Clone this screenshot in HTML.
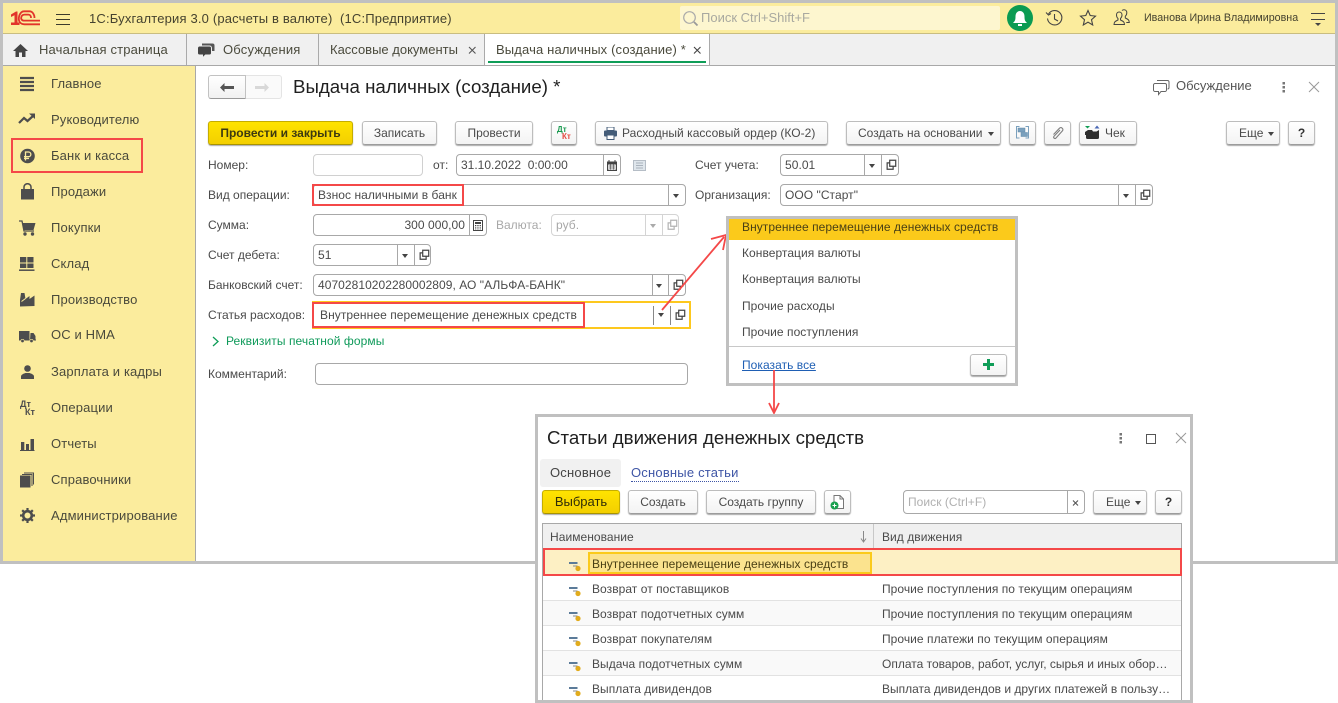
<!DOCTYPE html>
<html lang="ru"><head><meta charset="utf-8"><title>Выдача наличных</title>
<style>
html,body{margin:0;padding:0;background:#fff}
#p{position:relative;width:1338px;height:703px;overflow:hidden;background:#fff;font-family:"Liberation Sans",Arial,sans-serif;font-size:12px;color:#4a4a4a}
#p div,#p span,#p svg{position:absolute;box-sizing:border-box}
.t{white-space:nowrap;height:16px;line-height:16px;letter-spacing:.05px}
.n{font-size:13px;color:#4a4a3c;letter-spacing:.14px}
.i{background:#fff;border:1px solid #a8a8a8;border-radius:4px;height:22px}
.s{top:0;bottom:0;width:1px;background:#a8a8a8}
.a{width:0;height:0;border-left:3.5px solid transparent;border-right:3.5px solid transparent;border-top:4px solid #444}
.b{background:linear-gradient(#fff,#f3f3f3);border:1px solid #bdbdbd;border-bottom-color:#9c9c9c;border-radius:3px;box-shadow:0 1px 1px #aaa;height:24px;text-align:center;line-height:22px;white-space:nowrap;color:#4a4a4a}
.y{background:linear-gradient(#ffe300,#f3cf00);border-color:#c5ad00;border-bottom-color:#a89300;font-weight:bold;color:#3d3a10}
.v{color:#4a4a4a;left:4px}
</style></head><body>
<div id="p">
<svg width="0" height="0" style="left:0;top:0"><defs>
<symbol id="o" viewBox="0 0 14 14"><path d="M5.500 1.500h7v7h-7zM5.500 4.500h-3v7.500h7v-3.500" fill="none" stroke="#444" stroke-width="1.400"/></symbol>
<symbol id="z" viewBox="0 0 13 11"><rect x="0" y="1" width="8.500" height="2" fill="#5b7b99"/><rect x="4" y="4.500" width="4.500" height="1" fill="#888"/><circle cx="9" cy="7.500" r="2.600" fill="#e2ac1d"/></symbol>
</defs></svg>

<!-- frame -->
<div style="left:0;top:0;width:1338px;height:564px;background:#c0c0c0"></div>
<div style="left:3px;top:3px;width:1332px;height:558px;background:#fff"></div>

<!-- header -->
<div style="left:3px;top:3px;width:1332px;height:31px;background:#fbec9d;border-bottom:1px solid #c9bd80"></div>
<svg style="left:11px;top:10px" width="30" height="16" viewBox="0 0 30 16"><path d="M0 4.500L5 1.500H6.500V12.500H8.500V15H0V12.500H3.500V5.200L0 7z" fill="#e2342b"/><path d="M29 14.300H13.500C9.500 14.300 6.600 11.500 8.300 5.500C9.500 2.500 11 1.300 13 1.300H18.500C21.500 1.300 23.500 4.500 23.500 8" fill="none" stroke="#e2342b" stroke-width="1.800"/><path d="M29 10.600H13C10.500 10.600 9.800 8.500 10.300 7C10.800 5.300 12 4.600 13.500 4.600H17.500C19 4.600 20 6 20 8" fill="none" stroke="#e2342b" stroke-width="1.800"/></svg>
<svg style="left:56px;top:13px" width="15" height="12"><path d="M0 1.500h14M0 6.500h14M0 11.500h14" stroke="#3c3a2c" stroke-width="1.100"/></svg>
<div class="t" style="left:89px;top:11px;font-size:13px;color:#45422f;letter-spacing:.17px">1С:Бухгалтерия 3.0 (расчеты в валюте) &nbsp;(1С:Предприятие)</div>
<div style="left:680px;top:6px;width:320px;height:24px;background:#fdf6cf;border-radius:2px"></div>
<svg style="left:682px;top:10px" width="17" height="17"><circle cx="7.500" cy="7.500" r="5.800" fill="none" stroke="#aaa" stroke-width="1.200"/><path d="M12 12l3.500 3.500" stroke="#999" stroke-width="1.800"/></svg>
<div class="t" style="left:701px;top:10px;font-size:13px;color:#a9a9a0;letter-spacing:0">Поиск Ctrl+Shift+F</div>
<svg style="left:1007px;top:5px" width="27" height="27"><circle cx="13" cy="13" r="13" fill="#0b9b52"/><path d="M6 18c2-2 2.500-3 2.500-6.500s2-5.500 4.500-5.500 4.500 2 4.500 5.500.5 4.500 2.500 6.500z" fill="#fff"/><rect x="11" y="19" width="4" height="2" fill="#fff"/></svg>
<svg style="left:1045px;top:9px" width="19" height="18" fill="none" stroke="#444" stroke-width="1.100"><path d="M3.500 5A7.200 7.200 0 1 1 2.500 9.500"/><path d="M1 3.500l2.500 2.500 2.500-1.500"/><path d="M9.500 5v5l3.500 2"/></svg>
<svg style="left:1079px;top:9px" width="18" height="18"><path d="M9 1.500l2.200 5 5.300.6-4 3.600 1.200 5.300L9 13.200 4.300 16l1.200-5.300-4-3.600 5.300-.6z" fill="none" stroke="#444" stroke-width="1.100"/></svg>
<svg style="left:1113px;top:9px" width="18" height="17" fill="none" stroke="#444" stroke-width="1"><path d="M1 15.500c0-3 2-3.500 4-4.500v-1.500c-1.200-1-1.500-2-1.500-3.500 0-2 1.300-3 2.700-3s2.800 1 2.800 3c0 1.500-.4 2.500-1.500 3.500V11c2 1 4 1.500 4 4.500z"/><path d="M9 1.500c.7-.6 1.400-.8 2-.8 1.500 0 2.800 1 2.800 3 0 1.500-.4 2.500-1.500 3.500V9c2 1 4 1.500 4 4.500h-3"/></svg>
<div class="t" style="left:1144px;top:10px;font-size:10.700px;color:#45422f;letter-spacing:0">Иванова Ирина Владимировна</div>
<svg style="left:1310px;top:12px" width="16" height="15"><path d="M1 1.500h14M1 7.500h14" stroke="#444" stroke-width="1"/><path d="M5 11h6l-3 3z" fill="#444"/></svg>

<!-- tabs -->
<div style="left:3px;top:34px;width:1332px;height:32px;background:#f0f0f0;border-bottom:1px solid #a8a8a8"></div>
<div style="left:186px;top:34px;width:1px;height:31px;background:#aaa"></div>
<div style="left:318px;top:34px;width:1px;height:31px;background:#aaa"></div>
<div style="left:484px;top:34px;width:226px;height:32px;background:#fff;border-left:1px solid #aaa;border-right:1px solid #aaa;border-bottom:1px solid #a8a8a8"></div>
<div style="left:488px;top:61px;width:218px;height:2px;background:#0f9d58"></div>
<svg style="left:13px;top:43px" width="15" height="14"><path d="M7.500 1L0 8h2.500v6h3.500V9.500h3V14h3.500V8H15z" fill="#444"/></svg>
<div class="t n" style="left:39px;top:42px;letter-spacing:.17px">Начальная страница</div>
<svg style="left:197px;top:42px" width="18" height="17"><path d="M5 1.500h10.500a2 2 0 0 1 2 2V9H5z" fill="#555"/><path d="M2.500 4h10a2 2 0 0 1 2 2v5a2 2 0 0 1-2 2H8.500L5.500 16v-3h-3a2 2 0 0 1-2-2V6a2 2 0 0 1 2-2z" fill="#444" stroke="#f0f0f0"/></svg>
<div class="t n" style="left:223px;top:42px;letter-spacing:.2px">Обсуждения</div>
<div class="t n" style="left:330px;top:42px;letter-spacing:0">Кассовые документы</div>
<svg style="left:468px;top:46px" width="9" height="9"><path d="M1 1l6.500 6.500M7.500 1L1 7.500" stroke="#555" stroke-width="1.100"/></svg>
<div class="t n" style="left:496px;top:42px">Выдача наличных (создание) *</div>
<svg style="left:693px;top:46px" width="9" height="9"><path d="M1 1l6.500 6.500M7.500 1L1 7.500" stroke="#444" stroke-width="1.100"/></svg>

<!-- sidebar -->
<div style="left:3px;top:66px;width:193px;height:495px;background:#fbec9d;border-right:1px solid #a8a8a8"></div>
<svg style="left:19px;top:76px" width="16" height="16"><path d="M1 2h14M1 6h14M1 10h14M1 14h14" stroke="#4d4d4d" stroke-width="2.200"/></svg>
<div class="t n" style="left:51px;top:76px">Главное</div>
<svg style="left:18px;top:112px" width="18" height="14"><path d="M1 11l5-5 3.500 3L15 4" fill="none" stroke="#4d4d4d" stroke-width="2.200"/><path d="M11 1.500h6v5.500z" fill="#4d4d4d"/></svg>
<div class="t n" style="left:51px;top:112px">Руководителю</div>
<svg style="left:20px;top:148px" width="15" height="16"><circle cx="7.500" cy="8" r="7.300" fill="#4d4d4d"/><path d="M5.500 12.500V4h3a2.300 2.300 0 0 1 0 4.700h-4.500M4 10.500h5" fill="none" stroke="#fbec9d" stroke-width="1.300"/></svg>
<div class="t n" style="left:51px;top:148px">Банк и касса</div>
<svg style="left:21px;top:183px" width="13" height="17"><path d="M0 6h13v10.500H0z" fill="#4d4d4d"/><path d="M3 9V4a3.500 3.300 0 0 1 7 0v5" fill="none" stroke="#4d4d4d" stroke-width="1.500"/></svg>
<div class="t n" style="left:51px;top:184px">Продажи</div>
<svg style="left:19px;top:220px" width="17" height="16"><path d="M3.500 3h13l-2 7H5z" fill="#4d4d4d"/><path d="M0 1h3l2 10h10" fill="none" stroke="#4d4d4d" stroke-width="1.300"/><circle cx="6" cy="14" r="1.700" fill="#4d4d4d"/><circle cx="13.500" cy="14" r="1.700" fill="#4d4d4d"/></svg>
<div class="t n" style="left:51px;top:220px">Покупки</div>
<svg style="left:19px;top:256px" width="16" height="16"><path d="M1 1h6.300v5.500H1zM8.300 1h6.200v5.500H8.300zM1 7.500h6.300V12H1zM8.300 7.500h6.200V12H8.300z" fill="#4d4d4d"/><path d="M0 14.200h15.500" stroke="#4d4d4d" stroke-width="1.500"/></svg>
<div class="t n" style="left:51px;top:256px">Склад</div>
<svg style="left:20px;top:292px" width="15" height="15"><path d="M0 14.500V8l1-7h3.500l1 6 4-3v3l5-3.500v10.500z" fill="#4d4d4d"/><path d="M1.500 9.500l4-3" stroke="#fbec9d"/></svg>
<div class="t n" style="left:51px;top:292px">Производство</div>
<svg style="left:19px;top:331px" width="17" height="12"><rect x="0" y="0" width="10.500" height="8.500" fill="#4d4d4d"/><path d="M11.500 2h3l2 3v4h-5.500z" fill="#4d4d4d"/><path d="M0 9h17" stroke="#4d4d4d"/><circle cx="3.500" cy="10" r="1.700" fill="#4d4d4d" stroke="#fbec9d" stroke-width=".6"/><circle cx="12.500" cy="10" r="1.700" fill="#4d4d4d" stroke="#fbec9d" stroke-width=".6"/></svg>
<div class="t n" style="left:51px;top:327px">ОС и НМА</div>
<svg style="left:21px;top:365px" width="13" height="14"><circle cx="6.500" cy="3.500" r="3.300" fill="#4d4d4d"/><path d="M0 14v-2.500c0-2 3-3 4.500-3.500h4c1.500.5 4.500 1.500 4.500 3.500V14z" fill="#4d4d4d"/></svg>
<div class="t n" style="left:51px;top:364px">Зарплата и кадры</div>
<div class="t" style="left:20px;top:399px;font-size:9px;font-weight:bold;color:#4d4d4d;height:10px;line-height:10px">Дт</div>
<div class="t" style="left:25px;top:407px;font-size:9px;font-weight:bold;color:#4d4d4d;height:10px;line-height:10px">Кт</div>
<div class="t n" style="left:51px;top:400px">Операции</div>
<svg style="left:20px;top:438px" width="15" height="13"><path d="M1 4h3.300v8H1zM6 6h3v6H6zM10.500 1H14v11h-3.500z" fill="#4d4d4d"/><path d="M0 12.500h14.500" stroke="#4d4d4d"/></svg>
<div class="t n" style="left:51px;top:436px">Отчеты</div>
<svg style="left:20px;top:472px" width="15" height="16"><path d="M0 3.500h10.500V15.500H0z" fill="#4d4d4d"/><path d="M2 2.500h10V14M4 1h9.500v11.500" fill="none" stroke="#4d4d4d"/></svg>
<div class="t n" style="left:51px;top:472px">Справочники</div>
<svg style="left:20px;top:508px" width="15" height="15" viewBox="0 0 15 15"><circle cx="7.500" cy="7.500" r="4.300" fill="none" stroke="#4d4d4d" stroke-width="2.600"/><path d="M7.500 0v3M7.500 12v3M0 7.500h3M12 7.500h3M2.200 2.200l2 2M10.800 10.800l2 2M2.200 12.800l2-2M10.800 4.200l2-2" stroke="#4d4d4d" stroke-width="2.200"/></svg>
<div class="t n" style="left:51px;top:508px;letter-spacing:.16px">Администрирование</div>
<div style="left:11px;top:138px;width:132px;height:35px;border:2px solid #f44848"></div>

<!-- form head -->
<div style="left:208px;top:75px;width:38px;height:24px;background:linear-gradient(#fff,#f1f1f1);border:1px solid #c2c2c2;border-bottom-color:#999;border-radius:3px 0 0 3px"></div>
<div style="left:246px;top:75px;width:36px;height:24px;background:#fafafa;border:1px solid #e4e4e4;border-left:0;border-radius:0 3px 3px 0"></div>
<svg style="left:220px;top:83px" width="15" height="9"><path d="M4.500 0L0 4.500 4.500 9V6H14V3H4.500z" fill="#555"/></svg>
<svg style="left:255px;top:83px" width="15" height="9"><path d="M9.500 0L14 4.500 9.500 9V6H0V3h9.500z" fill="#d8d8d8"/></svg>
<div class="t" style="left:293px;top:75px;font-size:18.700px;height:24px;line-height:24px;color:#1f1f1f;letter-spacing:0">Выдача наличных (создание) *</div>
<svg style="left:1153px;top:79px" width="18" height="17" fill="none" stroke="#666" stroke-width="1"><path d="M2 4.500h10a1.500 1.500 0 0 1 1.500 1.500v5a1.500 1.500 0 0 1-1.500 1.500H8L5.500 15.500v-3H2A1.500 1.500 0 0 1 .5 11V6A1.500 1.500 0 0 1 2 4.500z"/><path d="M4 1.500h10.500A1.500 1.500 0 0 1 16 3v5.500a1.500 1.500 0 0 1-1.500 1.500"/></svg>
<div class="t n" style="left:1176px;top:78px;color:#555;letter-spacing:0">Обсуждение</div>
<svg style="left:1282px;top:82px" width="4" height="11"><path d="M.5 0H3v2.500H.5zM.5 4H3v2.500H.5zM.5 8H3v2.500H.5z" fill="#777"/></svg>
<svg style="left:1308px;top:81px" width="13" height="13"><path d="M1 1l10 10M11 1L1 11" stroke="#999" stroke-width="1"/></svg>

<!-- toolbar -->
<div class="b y" style="left:208px;top:121px;width:145px">Провести и закрыть</div>
<div class="b" style="left:362px;top:121px;width:75px">Записать</div>
<div class="b" style="left:455px;top:121px;width:78px">Провести</div>
<div class="b" style="left:551px;top:121px;width:26px"></div>
<div class="t" style="left:557px;top:125px;font-size:8px;font-weight:bold;color:#1a9a50;height:9px;line-height:9px">Дт</div>
<div class="t" style="left:562px;top:132px;font-size:8px;font-weight:bold;color:#e5473f;height:9px;line-height:9px">Кт</div>
<div class="b" style="left:595px;top:121px;width:233px;text-align:left;padding-left:26px;letter-spacing:.03px">Расходный кассовый ордер (КО-2)</div>
<svg style="left:604px;top:127px" width="13" height="13"><rect x="3" y="0" width="7" height="3.500" fill="#fff" stroke="#445c78"/><rect x="0" y="3.500" width="13" height="6" rx="1" fill="#445c78"/><rect x="3" y="8" width="7" height="4.500" fill="#fff" stroke="#445c78"/></svg>
<div class="b" style="left:846px;top:121px;width:155px;text-align:left;padding-left:11px">Создать на основании</div>
<div class="a" style="left:988px;top:132px"></div>
<div class="b" style="left:1009px;top:121px;width:27px"></div>
<svg style="left:1015px;top:125px" width="15" height="15"><path d="M4.500 1.500h-3v11.500h3M10.500 1.500h3v11.500h-3" fill="none" stroke="#7aa0bd"/><rect x="3" y="3" width="7" height="4" fill="#7aa0bd" stroke="#5f88a8" stroke-width=".5"/><rect x="6" y="7.500" width="6.500" height="4" fill="#7aa0bd" stroke="#5f88a8" stroke-width=".5"/></svg>
<div class="b" style="left:1044px;top:121px;width:27px"></div>
<svg style="left:1052px;top:126px" width="13" height="14" fill="none" stroke="#808080" stroke-width="1.100"><path d="M1.500 8.500l6-6.300a2 2 0 0 1 3 2.600L4 12A1.300 1.300 0 0 1 2 10.300L8 4"/></svg>
<div class="b" style="left:1079px;top:121px;width:58px;text-align:left;padding-left:25px">Чек</div>
<svg style="left:1085px;top:125px" width="15" height="15"><path d="M0 1h5l-2.500 2.500z" fill="#119d55"/><path d="M9.500 3.500L12 .5 14.500 3.500z" fill="#4867b5"/><path d="M0 7l3-2h4l1 1.500h3.500L14 5v7.500a1.500 1.500 0 0 1-1.500 1.500h-10A1.500 1.500 0 0 1 1 12.500V10H0z" fill="#2f2f2f"/></svg>
<div class="b" style="left:1226px;top:121px;width:54px;text-align:left;padding-left:12px">Еще</div>
<div class="a" style="left:1268px;top:132px"></div>
<div class="b" style="left:1288px;top:121px;width:27px;font-weight:bold;color:#333">?</div>

<!-- form labels & fields -->
<div class="t" style="left:208px;top:157px;letter-spacing:0">Номер:</div>
<div class="i" style="left:313px;top:154px;width:110px;border-color:#d0d0d0"></div>
<div class="t" style="left:433px;top:157px">от:</div>
<div class="i" style="left:456px;top:154px;width:165px"><span class="t v" style="top:2px;letter-spacing:0">31.10.2022 &nbsp;0:00:00</span><span class="s" style="left:146px"></span>
<svg style="left:150px;top:5px" width="10" height="11"><path d="M2 0v2M8 0v2" stroke="#444"/><rect x="0" y="1.500" width="10" height="9.500" fill="#444"/><path d="M1.200 4.500h7.600v5.300H1.200z" fill="#fff"/><path d="M2 6h6M2 8h6M3.500 4.500v5M6.500 4.500v5" stroke="#555" stroke-width=".7"/></svg></div>
<svg style="left:633px;top:160px" width="13" height="11"><rect x=".5" y=".5" width="12" height="10" fill="#dfe6ec" stroke="#b5bdc6"/><path d="M3 3h7M3 5.500h7M3 8h7" stroke="#aab3bd"/></svg>
<div class="t" style="left:695px;top:157px;letter-spacing:0">Счет учета:</div>
<div class="i" style="left:780px;top:154px;width:119px"><span class="t v" style="top:2px">50.01</span><span class="s" style="left:83px"></span><span class="a" style="left:88px;top:9px"></span><span class="s" style="left:100px"></span><svg style="left:104px;top:4px" width="12" height="12"><use href="#o"/></svg></div>

<div class="t" style="left:208px;top:187px;letter-spacing:0">Вид операции:</div>
<div class="i" style="left:313px;top:184px;width:373px"><span class="t v" style="top:2px">Взнос наличными в банк</span><span class="s" style="left:354px"></span><span class="a" style="left:359px;top:9px"></span></div>
<div style="left:312px;top:184px;width:152px;height:22px;border:2px solid #f44848"></div>
<div class="t" style="left:695px;top:187px;letter-spacing:0">Организация:</div>
<div class="i" style="left:780px;top:184px;width:373px"><span class="t v" style="top:2px">ООО "Старт"</span><span class="s" style="left:337px"></span><span class="a" style="left:342px;top:9px"></span><span class="s" style="left:354px"></span><svg style="left:358px;top:4px" width="12" height="12"><use href="#o"/></svg></div>

<div class="t" style="left:208px;top:217px;letter-spacing:0">Сумма:</div>
<div class="i" style="left:313px;top:214px;width:174px"><span class="t" style="right:21px;top:2px;color:#4a4a4a">300 000,00</span><span class="s" style="left:155px"></span>
<svg style="left:159px;top:5px" width="10" height="11"><rect x=".5" y=".5" width="9" height="10" fill="#fff" stroke="#444"/><rect x="2" y="2" width="6" height="2" fill="#444"/><path d="M2 5.500h6M2 7.200h6M2 8.900h6" stroke="#444" stroke-dasharray="1.300 1" stroke-width=".9"/></svg></div>
<div class="t" style="left:496px;top:217px;color:#a8a8a8;letter-spacing:0">Валюта:</div>
<div class="i" style="left:551px;top:214px;width:128px;border-color:#d4d4d4"><span class="t v" style="top:2px;color:#a8a8a8">руб.</span><span class="s" style="left:93px;background:#d4d4d4"></span><span class="a" style="left:98px;top:9px;border-top-color:#aaa"></span><span class="s" style="left:110px;background:#d4d4d4"></span><svg style="left:114px;top:4px;opacity:.4" width="12" height="12"><use href="#o"/></svg></div>

<div class="t" style="left:208px;top:247px;letter-spacing:0">Счет дебета:</div>
<div class="i" style="left:313px;top:244px;width:118px"><span class="t v" style="top:2px">51</span><span class="s" style="left:83px"></span><span class="a" style="left:88px;top:9px"></span><span class="s" style="left:100px"></span><svg style="left:104px;top:4px" width="12" height="12"><use href="#o"/></svg></div>

<div class="t" style="left:208px;top:277px;letter-spacing:0">Банковский счет:</div>
<div class="i" style="left:313px;top:274px;width:373px"><span class="t v" style="top:2px">40702810202280002809, АО "АЛЬФА-БАНК"</span><span class="s" style="left:338px"></span><span class="a" style="left:342px;top:9px"></span><span class="s" style="left:354px"></span><svg style="left:358px;top:4px" width="12" height="12"><use href="#o"/></svg></div>

<div class="t" style="left:208px;top:307px;letter-spacing:0">Статья расходов:</div>
<div style="left:312px;top:301px;width:379px;height:28px;border:2px solid #fdc81e;background:#fff"></div>
<div style="left:653px;top:306px;width:1px;height:19px;background:#888"></div>
<div class="a" style="left:658px;top:313px"></div>
<div style="left:670px;top:306px;width:1px;height:19px;background:#888"></div>
<svg style="left:674px;top:309px" width="12" height="12"><use href="#o"/></svg>
<div style="left:312px;top:302px;width:273px;height:26px;border:2px solid #f44848"></div>
<div class="t" style="left:320px;top:307px;letter-spacing:.075px">Внутреннее перемещение денежных средств</div>
<svg style="left:212px;top:336px" width="8" height="11"><path d="M1 1l5 4.500L1 10" fill="none" stroke="#0f9d58" stroke-width="1.300"/></svg>
<div class="t" style="left:226px;top:333px;color:#0f9a5a;letter-spacing:.08px">Реквизиты печатной формы</div>
<div class="t" style="left:208px;top:366px;letter-spacing:0">Комментарий:</div>
<div class="i" style="left:315px;top:363px;width:373px"></div>

<!-- arrows -->
<svg style="left:650px;top:225px" width="90" height="90"><path d="M12 85L74 12" stroke="#f44848" stroke-width="1.800" fill="none"/><path d="M61 14l15-4-3 15" stroke="#f44848" stroke-width="1.800" fill="none"/></svg>

<!-- popup -->
<div style="left:726px;top:216px;width:292px;height:170px;border:3px solid #c0c0c0;background:#fff"></div>
<div style="left:729px;top:219px;width:286px;height:21px;background:#fbca1b"></div>
<div class="t" style="left:742px;top:219px;color:#4a4015;letter-spacing:.06px">Внутреннее перемещение денежных средств</div>
<div class="t" style="left:742px;top:245px">Конвертация валюты</div>
<div class="t" style="left:742px;top:271px">Конвертация валюты</div>
<div class="t" style="left:742px;top:298px">Прочие расходы</div>
<div class="t" style="left:742px;top:324px">Прочие поступления</div>
<div style="left:729px;top:346px;width:286px;height:1px;background:#c8c8c8"></div>
<div class="t" style="left:742px;top:357px;color:#1f5fb4;text-decoration:underline">Показать все</div>
<div class="b" style="left:970px;top:354px;width:37px;height:22px"></div>
<svg style="left:983px;top:359px" width="11" height="11"><path d="M4 0h3v4h4v3H7v4H4V7H0V4h4z" fill="#0f9d58"/></svg>
<svg style="left:764px;top:369px" width="20" height="46"><path d="M10 1v43" stroke="#f44848" stroke-width="1.800"/><path d="M5 34l5 10 5-10" stroke="#f44848" stroke-width="1.800" fill="none"/></svg>

<!-- dialog -->
<div style="left:535px;top:414px;width:658px;height:289px;border:3px solid #c0c0c0;background:#fff"></div>
<div class="t" style="left:547px;top:426px;font-size:18.700px;height:24px;line-height:24px;color:#1f1f1f;letter-spacing:0">Статьи движения денежных средств</div>
<svg style="left:1119px;top:433px" width="4" height="11"><path d="M.5 0H3v2.500H.5zM.5 4H3v2.500H.5zM.5 8H3v2.500H.5z" fill="#777"/></svg>
<div style="left:1146px;top:434px;width:10px;height:10px;border:1px solid #555"></div>
<svg style="left:1175px;top:432px" width="13" height="13"><path d="M1 1l10 10M11 1L1 11" stroke="#999" stroke-width="1"/></svg>
<div style="left:540px;top:459px;width:81px;height:28px;background:#f1f1f1;border-radius:3px"></div>
<div class="t n" style="left:550px;top:465px;color:#444;letter-spacing:.2px">Основное</div>
<div class="t n" style="left:631px;top:465px;color:#3f56a6;border-bottom:1px dotted #3f56a6;height:17px;letter-spacing:.2px">Основные статьи</div>
<div class="b y" style="left:542px;top:490px;width:78px;font-size:13px;font-weight:normal;color:#2f2c08">Выбрать</div>
<div class="b" style="left:628px;top:490px;width:70px">Создать</div>
<div class="b" style="left:706px;top:490px;width:110px">Создать группу</div>
<div class="b" style="left:824px;top:490px;width:27px"></div>
<svg style="left:830px;top:495px" width="15" height="15"><path d="M4 .500h6l3.500 3.500v9.500H4z" fill="#fff" stroke="#777"/><path d="M10 .500V4h3.500" fill="none" stroke="#777"/><circle cx="4.500" cy="10.500" r="4" fill="#18a04e"/><path d="M2.500 10.500h4M4.500 8.500v4" stroke="#fff"/></svg>
<div class="i" style="left:903px;top:490px;width:182px;height:24px"><span class="t" style="left:4px;top:3px;color:#b0b0b0">Поиск (Ctrl+F)</span><span class="s" style="left:163px"></span></div>
<svg style="left:1072px;top:499px" width="8" height="8"><path d="M1 1.500l5 5M6 1.500l-5 5" stroke="#555" stroke-width="1.100"/></svg>
<div class="b" style="left:1093px;top:490px;width:54px;text-align:left;padding-left:12px">Еще</div>
<div class="a" style="left:1135px;top:501px"></div>
<div class="b" style="left:1155px;top:490px;width:27px;font-weight:bold;color:#333">?</div>

<!-- table -->
<div style="left:542px;top:523px;width:640px;height:177px;border:1px solid #a8a8a8;border-bottom:0;background:#fff"></div>
<div style="left:543px;top:524px;width:638px;height:25px;background:#f0f0f0"></div>
<div style="left:873px;top:524px;width:1px;height:25px;background:#c8c8c8"></div>
<div class="t" style="left:550px;top:529px">Наименование</div>
<svg style="left:860px;top:531px" width="7" height="12"><path d="M3.500 0v10M1 7.500l2.500 3.500L6 7.500" fill="none" stroke="#888"/></svg>
<div class="t" style="left:882px;top:529px">Вид движения</div>

<div style="left:543px;top:550px;width:638px;height:25px;background:#fdf0c4"></div>
<div style="left:588px;top:552px;width:284px;height:22px;background:#fbe38e;border:2px solid #fbca1b"></div>
<svg style="left:569px;top:561px" width="13" height="11"><use href="#z"/></svg>
<div class="t" style="left:592px;top:556px;color:#4a4015;letter-spacing:.06px">Внутреннее перемещение денежных средств</div>
<div style="left:543px;top:548px;width:639px;height:28px;border:2px solid #f44848"></div>

<div style="left:543px;top:576px;width:638px;height:25px;border-bottom:1px solid #e2e2e2"></div>
<div style="left:543px;top:601px;width:638px;height:25px;background:#f9f9f9;border-bottom:1px solid #e2e2e2"></div>
<div style="left:543px;top:626px;width:638px;height:25px;border-bottom:1px solid #e2e2e2"></div>
<div style="left:543px;top:651px;width:638px;height:25px;background:#f9f9f9;border-bottom:1px solid #e2e2e2"></div>

<svg style="left:569px;top:586px" width="13" height="11"><use href="#z"/></svg>
<div class="t" style="left:592px;top:581px">Возврат от поставщиков</div>
<div class="t" style="left:882px;top:581px">Прочие поступления по текущим операциям</div>
<svg style="left:569px;top:611px" width="13" height="11"><use href="#z"/></svg>
<div class="t" style="left:592px;top:606px">Возврат подотчетных сумм</div>
<div class="t" style="left:882px;top:606px">Прочие поступления по текущим операциям</div>
<svg style="left:569px;top:636px" width="13" height="11"><use href="#z"/></svg>
<div class="t" style="left:592px;top:631px">Возврат покупателям</div>
<div class="t" style="left:882px;top:631px">Прочие платежи по текущим операциям</div>
<svg style="left:569px;top:661px" width="13" height="11"><use href="#z"/></svg>
<div class="t" style="left:592px;top:656px">Выдача подотчетных сумм</div>
<div class="t" style="left:882px;top:656px;letter-spacing:0">Оплата товаров, работ, услуг, сырья и иных обор…</div>
<svg style="left:569px;top:686px" width="13" height="11"><use href="#z"/></svg>
<div class="t" style="left:592px;top:681px">Выплата дивидендов</div>
<div class="t" style="left:882px;top:681px;letter-spacing:0">Выплата дивидендов и других платежей в пользу…</div>
</div>
</body></html>
